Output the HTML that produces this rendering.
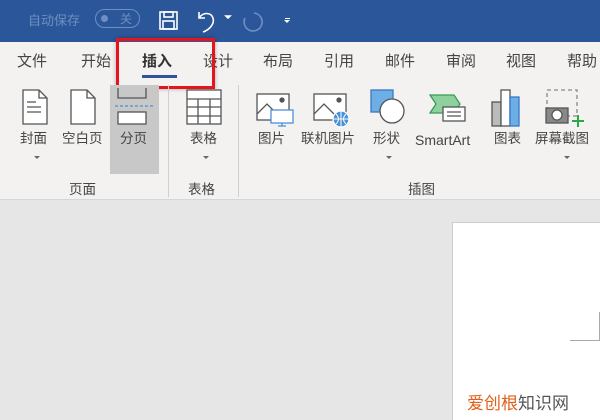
<!DOCTYPE html><html><head><meta charset="utf-8"><style>
*{margin:0;padding:0;box-sizing:border-box}
body{width:600px;height:420px;overflow:hidden;position:relative;background:#e6e6e6;font-family:"Liberation Sans","Noto Sans CJK SC",sans-serif;}
.a{position:absolute}
.t{position:absolute;font-size:15px;color:#444;white-space:nowrap;line-height:20px}
.s{position:absolute;font-size:13.5px;color:#444;white-space:nowrap;line-height:18px}
</style></head><body>
<div class="a" style="left:0;top:0;width:600px;height:42px;background:#2b579a"></div>
<div class="a" style="left:28px;top:10px;font-size:13px;color:#6f8fc0">自动保存</div>
<div class="a" style="left:95px;top:9px;width:45px;height:19px;border:1.5px solid #6f8fc0;border-radius:10px"></div>
<div class="a" style="left:101px;top:15px;width:7px;height:7px;background:#6f8fc0;border-radius:50%"></div>
<div class="a" style="left:120px;top:10px;font-size:12px;color:#6f8fc0">关</div>
<svg class="a" style="left:158px;top:10px" width="22" height="22" viewBox="0 0 22 22" fill="none" stroke="#fff" stroke-width="1.6"><rect x="2" y="2" width="17" height="17"/><rect x="6" y="2" width="9" height="5"/><rect x="5" y="11" width="11" height="8"/></svg>
<svg class="a" style="left:196px;top:8px" width="40" height="26" viewBox="0 0 40 26" fill="none" stroke="#fff" stroke-width="1.6"><path d="M3 4v6h6M3 10c4-6 12-6 14 0s-4 12-10 14"/><path d="M30 8l2 2 2-2z" fill="#fff"/></svg>
<svg class="a" style="left:240px;top:10px" width="24" height="24" viewBox="0 0 24 24" fill="none" stroke="#6f8fc0" stroke-width="1.6"><path d="M14 3a9 9 0 1 1-9 5"/></svg>
<div class="a" style="left:285px;top:18px;width:5px;height:1px;background:#fff"></div>
<div class="a" style="left:284px;top:20px;border:3px solid transparent;border-top-color:#fff"></div>
<div class="a" style="left:0;top:42px;width:600px;height:158px;background:#f3f2f1;border-bottom:1px solid #d6d6d6"></div>
<div class="t" style="left:17px;top:52px">文件</div>
<div class="t" style="left:81px;top:52px">开始</div>
<div class="t" style="left:142px;top:52px;font-weight:bold;color:#333">插入</div>
<div class="a" style="left:142px;top:75px;width:35px;height:3px;background:#2b579a"></div>
<div class="t" style="left:203px;top:52px">设计</div>
<div class="t" style="left:263px;top:52px">布局</div>
<div class="t" style="left:324px;top:52px">引用</div>
<div class="t" style="left:385px;top:52px">邮件</div>
<div class="t" style="left:446px;top:52px">审阅</div>
<div class="t" style="left:506px;top:52px">视图</div>
<div class="t" style="left:567px;top:52px">帮助</div>
<div class="a" style="left:116px;top:38px;width:99px;height:51px;border:3px solid #e8141b;box-shadow:0 0 4px rgba(0,0,0,.3)"></div>
<div class="a" style="left:110px;top:85px;width:49px;height:89px;background:#c8c8c8"></div>
<svg class="a" style="left:20px;top:88px" width="30" height="38" viewBox="0 0 30 38" fill="#fff" stroke="#555" stroke-width="1.3"><path d="M3 2h16l8 8v26H3z"/><path d="M19 2v8h8M7 14h9M7 19h14M7 24h14" fill="none"/></svg>
<svg class="a" style="left:68px;top:88px" width="30" height="38" viewBox="0 0 30 38" fill="#fff" stroke="#555" stroke-width="1.3"><path d="M3 2h16l8 8v26H3z"/><path d="M19 2v8h8" fill="none"/></svg>
<svg class="a" style="left:114px;top:84px" width="40" height="42" viewBox="0 0 40 42" fill="none" stroke="#555" stroke-width="1.3"><path d="M4 4v10h28V4"/><path d="M1 22h38" stroke="#4a90d9" stroke-dasharray="3 2"/><rect x="4" y="28" width="28" height="12" fill="#fff"/></svg>
<div class="s" style="left:20px;top:130px">封面</div>
<div class="s" style="left:62px;top:130px">空白页</div>
<div class="s" style="left:120px;top:130px">分页</div>
<div class="a" style="left:34px;top:156px;border:3px solid transparent;border-top-color:#666"></div>
<div class="s" style="left:69px;top:181px">页面</div>
<div class="a" style="left:168px;top:85px;width:1px;height:112px;background:#d0d0d0"></div>
<svg class="a" style="left:185px;top:88px" width="38" height="38" viewBox="0 0 38 38" fill="#fff" stroke="#555" stroke-width="1.3"><rect x="2" y="2" width="34" height="34"/><path d="M2 11h34M2 19h34M2 28h34M13 11v25M25 11v25" fill="none"/></svg>
<div class="s" style="left:190px;top:130px">表格</div>
<div class="a" style="left:203px;top:156px;border:3px solid transparent;border-top-color:#666"></div>
<div class="s" style="left:188px;top:181px">表格</div>
<div class="a" style="left:238px;top:85px;width:1px;height:112px;background:#d0d0d0"></div>
<svg class="a" style="left:255px;top:92px" width="40" height="36" viewBox="0 0 40 36" fill="#fff" stroke="#555" stroke-width="1.3"><rect x="2" y="2" width="32" height="26"/><path d="M2 22l10-10 10 10" fill="none"/><circle cx="27" cy="8" r="2" fill="#555"/><rect x="16" y="18" width="22" height="13" stroke="#4a90d9"/><path d="M27 31v3M23 34h8" stroke="#4a90d9" fill="none"/></svg>
<svg class="a" style="left:312px;top:92px" width="40" height="36" viewBox="0 0 40 36" fill="#fff" stroke="#555" stroke-width="1.3"><rect x="2" y="2" width="32" height="26"/><path d="M2 22l10-10 10 10" fill="none"/><circle cx="27" cy="8" r="2" fill="#555"/><circle cx="29" cy="27" r="8" fill="#4a90d9" stroke="#fff"/><path d="M21 27h16M29 19v16M24 22q5 5 0 10M34 22q-5 5 0 10" stroke="#fff" fill="none" stroke-width="1"/></svg>
<svg class="a" style="left:369px;top:88px" width="40" height="40" viewBox="0 0 40 40" stroke="#555" stroke-width="1.3"><rect x="2" y="2" width="22" height="22" fill="#6eaee6" stroke="#3a78c2"/><circle cx="23" cy="23" r="12" fill="#fff"/></svg>
<svg class="a" style="left:428px;top:92px" width="40" height="36" viewBox="0 0 40 36" stroke-width="1.3"><path d="M2 3h24l6 9-6 9H2l6-9z" fill="#8fd19e" stroke="#3a9a55"/><rect x="15" y="15" width="22" height="14" fill="#fff" stroke="#555"/><path d="M19 20h14M19 24h14" stroke="#555"/></svg>
<svg class="a" style="left:490px;top:88px" width="34" height="40" viewBox="0 0 34 40" stroke="#555" stroke-width="1.3"><rect x="2" y="14" width="9" height="24" fill="#bbb"/><rect x="11" y="2" width="9" height="36" fill="#fff"/><rect x="20" y="9" width="9" height="29" fill="#6eaee6" stroke="#3a78c2"/></svg>
<svg class="a" style="left:545px;top:88px" width="42" height="40" viewBox="0 0 42 40" fill="none" stroke-width="1.3"><rect x="2" y="2" width="30" height="26" stroke="#888" stroke-dasharray="4 3"/><rect x="1" y="20" width="22" height="15" fill="#888" stroke="#555"/><circle cx="12" cy="27" r="5" fill="#fff" stroke="#555"/><path d="M33 27v12M27 33h12" stroke="#2aa84a" stroke-width="2"/></svg>
<div class="s" style="left:258px;top:130px">图片</div>
<div class="s" style="left:301px;top:130px">联机图片</div>
<div class="s" style="left:373px;top:130px">形状</div>
<div class="s" style="left:415px;top:131px;font-size:14px">SmartArt</div>
<div class="s" style="left:494px;top:130px">图表</div>
<div class="s" style="left:535px;top:130px">屏幕截图</div>
<div class="a" style="left:386px;top:156px;border:3px solid transparent;border-top-color:#666"></div>
<div class="a" style="left:564px;top:156px;border:3px solid transparent;border-top-color:#666"></div>
<div class="s" style="left:408px;top:181px">插图</div>
<div class="a" style="left:452px;top:222px;width:148px;height:198px;background:#fff;border-left:1px solid #ccc;border-top:1px solid #ccc"></div>
<div class="a" style="left:570px;top:340px;width:30px;height:1px;background:#aaa"></div>
<div class="a" style="left:599px;top:312px;width:1px;height:29px;background:#aaa"></div>
<div class="a" style="left:467px;top:389px;font-size:17px;color:#555;white-space:nowrap"><span style="color:#e0601a">爱创根</span>知识网</div>
</body></html>
